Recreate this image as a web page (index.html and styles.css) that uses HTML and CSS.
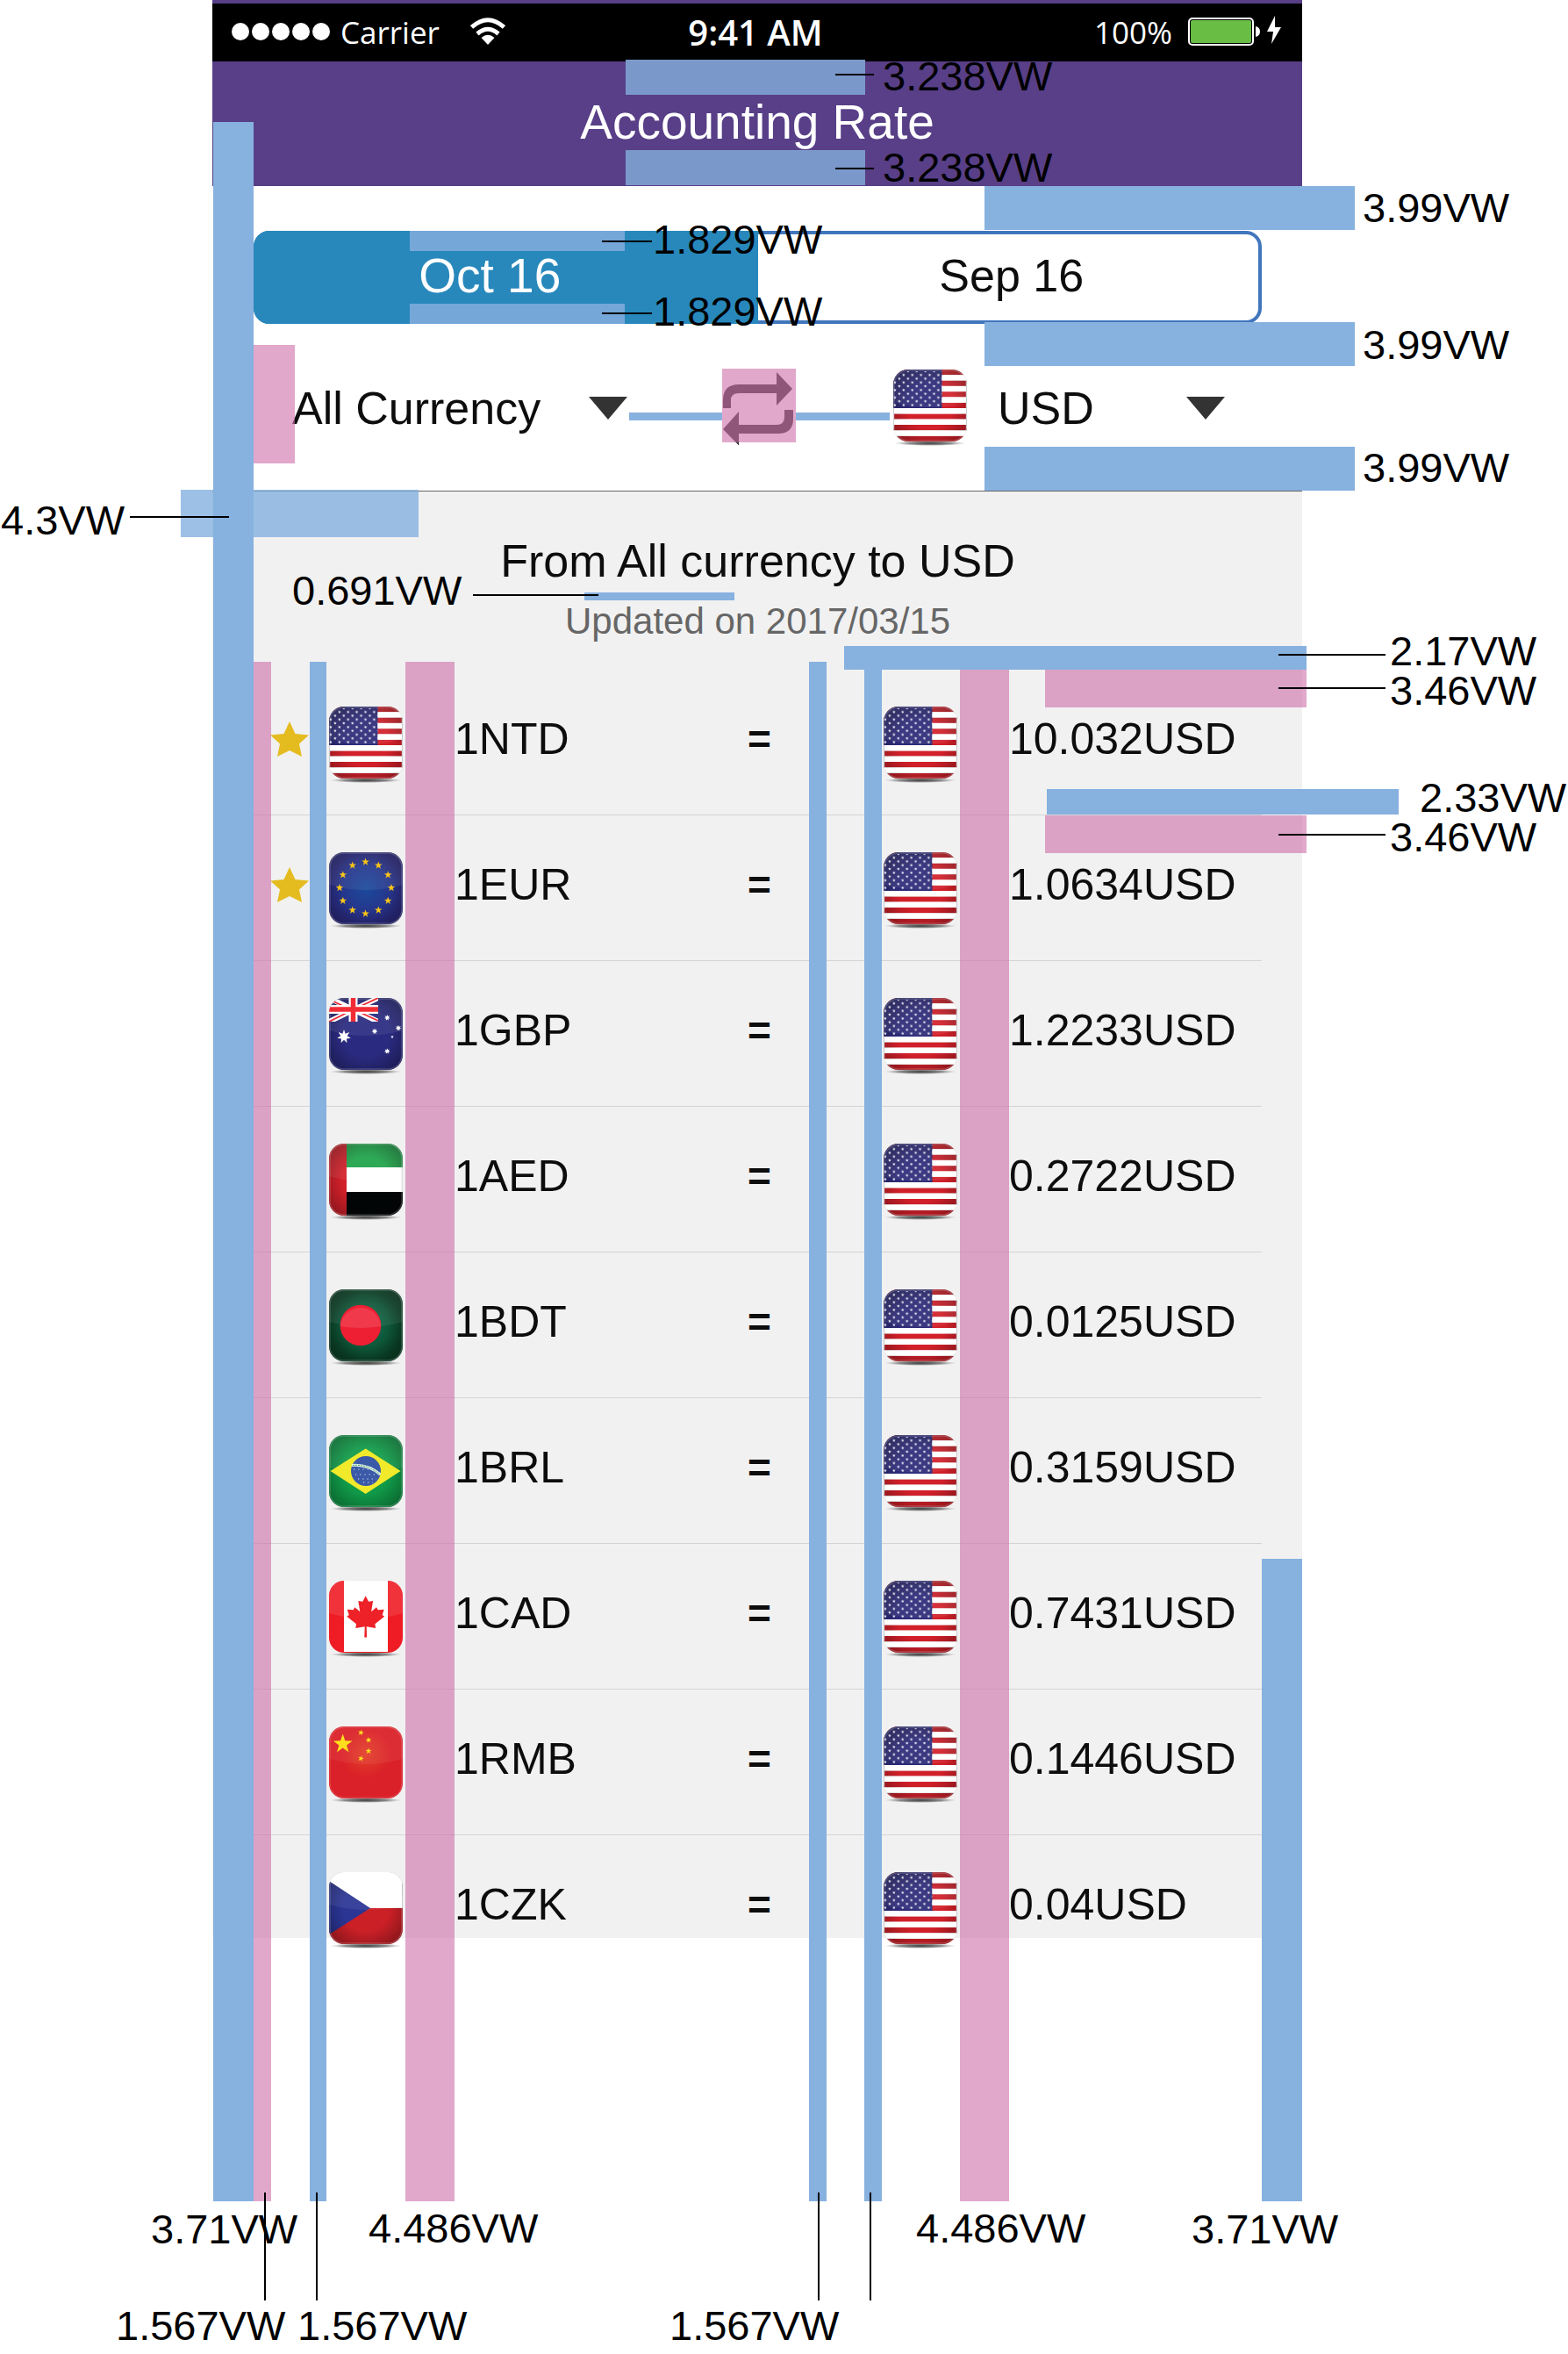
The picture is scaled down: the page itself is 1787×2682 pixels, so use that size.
FILE: index.html
```html
<!DOCTYPE html>
<html lang="en">
<head>
<meta charset="utf-8">
<meta name="viewport" content="width=device-width, initial-scale=1">
<title>Accounting Rate – spacing spec</title>
<link rel="stylesheet" href="styles.css">
</head>
<body>
<svg class="defs" aria-hidden="true">
  <defs>
    <clipPath id="tile"><rect width="84" height="82" rx="17"/></clipPath>
    <radialGradient id="shade" cx="50%" cy="50%" r="70%">
      <stop offset="0.45" stop-color="#000" stop-opacity="0"/>
      <stop offset="1" stop-color="#000" stop-opacity="0.4"/>
    </radialGradient>
    <radialGradient id="ground">
      <stop offset="0" stop-color="#222" stop-opacity="0.9"/>
      <stop offset="0.6" stop-color="#444" stop-opacity="0.6"/>
      <stop offset="1" stop-color="#888" stop-opacity="0"/>
    </radialGradient>
    <radialGradient id="euBlue"><stop offset="0" stop-color="#1b4a9c"/><stop offset="1" stop-color="#2b2b83"/></radialGradient>
    <radialGradient id="bdGreen"><stop offset="0" stop-color="#117455"/><stop offset="1" stop-color="#0b4428"/></radialGradient>
    <radialGradient id="cnRed" cy="38%"><stop offset="0" stop-color="#e4402a"/><stop offset="0.7" stop-color="#da2028"/></radialGradient>
    <path id="star5" d="M0-10 2.35-3.24 9.51-3.09 3.8 1.24 5.88 8.09 0 4-5.88 8.09-3.8 1.24-9.51-3.09-2.35-3.24Z"/>
    <path id="star7" d="M0-10 2-4.2 7.8-6.2 4.6-1 9.7 2.2 3.7 3 4.3 9 0 4.7-4.3 9-3.7 3-9.7 2.2-4.6-1-7.8-6.2-2-4.2Z"/>
    <pattern id="stars" x="0" y="0" width="9.9" height="8.6" patternUnits="userSpaceOnUse">
      <use href="#star5" transform="translate(1.9 6.2) scale(.19)" fill="#fff"/>
      <use href="#star5" transform="translate(6.9 1.9) scale(.19)" fill="#fff"/>
    </pattern>
    <g id="gloss">
      <rect width="84" height="82" fill="url(#shade)"/>
      <path d="M0 0H84V37Q42 49 0 37Z" fill="#fff" opacity=".07"/>
      <rect x="1" y="1" width="82" height="80" rx="16" fill="none" stroke="#fff" stroke-opacity=".18" stroke-width="1.5"/>
    </g>
    <ellipse id="shadow" cx="42" cy="84" rx="41" ry="3" fill="url(#ground)"/>
    <symbol id="us" viewBox="0 0 84 88">
      <use href="#shadow"/>
      <g clip-path="url(#tile)">
        <path stroke="#d2202a" stroke-width="6.2" d="M0 3.1H84M0 15.7H84M0 28.3H84M0 40.9H84M0 53.5H84M0 66.1H84M0 79H84"/>
        <path fill="#2d2b78" d="M0 0H55.500V44H0Z"/>
        <use href="#gloss"/>
        <path stroke="#fff" stroke-width="6.200" d="M55.500 9.400H84M55.500 22H84M55.500 34.600H84M0 47.200H84M0 59.800H84M0 72.500H84"/>
        <path fill="url(#stars)" d="M0 2H55.500V43H0Z"/>
        <path fill="#c9cbd0" d="M0 44H1V70H0ZM83 12H84V70H83Z"/>
      </g>
    </symbol>
    <symbol id="eu" viewBox="0 0 84 88">
      <use href="#shadow"/>
      <g clip-path="url(#tile)">
        <path fill="url(#euBlue)" d="M0 0H84V82H0Z"/>
        <use href="#gloss"/>
        <g fill="#fcc617">
          <use href="#star5" transform="translate(41.500 11) scale(.45)"/><use href="#star5" transform="translate(56.300 15) scale(.45)"/>
          <use href="#star5" transform="translate(67.200 25.800) scale(.45)"/><use href="#star5" transform="translate(71 40.500) scale(.45)"/>
          <use href="#star5" transform="translate(67.200 55.300) scale(.45)"/><use href="#star5" transform="translate(56.300 66) scale(.45)"/>
          <use href="#star5" transform="translate(41.500 70) scale(.45)"/><use href="#star5" transform="translate(26.700 66) scale(.45)"/>
          <use href="#star5" transform="translate(15.800 55.300) scale(.45)"/><use href="#star5" transform="translate(12 40.500) scale(.45)"/>
          <use href="#star5" transform="translate(15.800 25.800) scale(.45)"/><use href="#star5" transform="translate(26.700 15) scale(.45)"/>
        </g>
      </g>
    </symbol>
    <symbol id="au" viewBox="0 0 84 88">
      <use href="#shadow"/>
      <g clip-path="url(#tile)">
        <path fill="#2a2a80" d="M0 0H84V82H0Z"/>
        <use href="#gloss"/>
        <svg width="56" height="27" viewBox="0 0 56 27">
          <path stroke="#fff" stroke-width="6" d="M0 0 56 27M56 0 0 27"/>
          <path stroke="#ee2a33" stroke-width="1.800" d="M0 1.500 24 13M56 0 30 12M0 27 24 15M56 26 32 15"/>
          <path stroke="#fff" stroke-width="10" d="M27.500 0V27M0 13H56"/>
          <path stroke="#f22c35" stroke-width="5.500" d="M27.500 0V27M0 13H56"/>
        </svg>
        <g fill="#fff">
          <use href="#star7" transform="translate(17 44) scale(.8)"/><use href="#star7" transform="translate(66.300 22.500) scale(.35)"/>
          <use href="#star7" transform="translate(79 34.300) scale(.35)"/><use href="#star7" transform="translate(52 38) scale(.35)"/>
          <use href="#star7" transform="translate(66.300 60.700) scale(.35)"/><use href="#star5" transform="translate(72 44.300) scale(.2)"/>
        </g>
      </g>
    </symbol>
    <symbol id="ae" viewBox="0 0 84 88">
      <use href="#shadow"/>
      <g clip-path="url(#tile)">
        <path fill="#1fa349" d="M20 0H84V27H20Z"/>
        <path fill="#020506" d="M20 55H84V82H20Z"/><path fill="#d3202a" d="M0 0H20V82H0Z"/>
        <use href="#gloss"/>
        <path fill="#fff" d="M20 27H84V55H20Z"/>
        <path fill="#e2e2e2" d="M82.500 27H84V55H82.500Z"/>
      </g>
    </symbol>
    <symbol id="bd" viewBox="0 0 84 88">
      <use href="#shadow"/>
      <g clip-path="url(#tile)">
        <path fill="url(#bdGreen)" d="M0 0H84V82H0Z"/>
        <use href="#gloss"/>
        <circle cx="36" cy="41" r="23.300" fill="#ee1f33"/>
        <path d="M12.800 42A23.300 23.300 0 0 1 59.200 42Q36 46 12.800 42Z" fill="#fff" opacity=".12"/>
      </g>
    </symbol>
    <symbol id="br" viewBox="0 0 84 88">
      <use href="#shadow"/>
      <g clip-path="url(#tile)">
        <path fill="#109a48" d="M0 0H84V82H0Z"/>
        <use href="#gloss"/>
        <path fill="#f1ea2b" d="M1.500 41 41.700 15.500 81.500 41 41.700 67Z"/>
        <circle cx="42" cy="41" r="17" fill="#3a5aa8"/>
        <path fill="none" stroke="#e3f1e6" stroke-width="3" d="M26 34.500Q44 33 58.500 45"/>
        <path fill="none" stroke="#4ea366" stroke-width="1" stroke-dasharray="2 1" d="M27 34.500Q44 33 58 45"/>
        <path stroke="#dfe6f5" stroke-width="1.200" stroke-dasharray="1.200 4" d="M28 39H50M30 45H56M33 50H54M39 54H50"/>
      </g>
    </symbol>
    <symbol id="ca" viewBox="0 0 84 88">
      <use href="#shadow"/>
      <g clip-path="url(#tile)">
        <path fill="#ef1c25" d="M0 0H84V82H0Z"/>
        <path fill="#fff" opacity=".1" d="M0 0H84V37Q42 49 0 37Z"/>
        <path fill="#fff" d="M17 0H67V81H17Z"/>
        <path fill="#ed2127" d="M41.700 17.300 45.100 23.700 50.100 23 48.100 35.300 54.100 30.300 55.700 33.300 62.700 32.700 60.700 39 63.100 40.700 52.400 49.300 53.100 54 42.700 52.300 43.100 64.500H40.300L40.700 52.300 30.300 54 31 49.300 20.300 40.700 22.700 39 20.700 32.700 27.700 33.300 29.300 30.300 35.300 35.300 33.300 23 38.300 23.700Z"/>
      </g>
    </symbol>
    <symbol id="cn" viewBox="0 0 84 88">
      <use href="#shadow"/>
      <g clip-path="url(#tile)">
        <path fill="url(#cnRed)" d="M0 0H84V82H0Z"/>
        <path fill="#fff" opacity=".06" d="M0 0H84V37Q42 49 0 37Z"/>
        <rect x="1" y="1" width="82" height="80" rx="16" fill="none" stroke="#fff" stroke-opacity=".2"/>
        <g fill="#ffdd1c">
          <use href="#star5" transform="translate(15.700 20) scale(1.150)"/>
          <use href="#star5" transform="translate(36.300 7) rotate(12) scale(.36)"/><use href="#star5" transform="translate(45 15.500) rotate(-10) scale(.36)"/>
          <use href="#star5" transform="translate(45 28) scale(.36)"/><use href="#star5" transform="translate(36.300 36.500) rotate(15) scale(.36)"/>
        </g>
      </g>
    </symbol>
    <symbol id="cz" viewBox="0 0 84 88">
      <use href="#shadow"/>
      <g clip-path="url(#tile)">
        <path fill="#cc2027" d="M0 41H84V82H0Z"/><path fill="#2a3594" d="M0 10 47 41 0 71Z"/>
        <use href="#gloss"/>
        <path fill="#fff" d="M0 0H83V40.500H47L0 10Z"/>
      </g>
    </symbol>
    <symbol id="fav" viewBox="0 0 44 42"><path fill="#e5bc20" d="M22 1 28.500 15 44 16.500 33 26.500 36 41 22 34 8 41 11 26.500 0 16.500 15.500 15Z"/></symbol>
    <symbol id="caret" viewBox="0 0 44 26"><path fill="#333" d="M0 0H44L22 26Z"/></symbol>
  </defs>
</svg>

<main class="phone">
  <div class="status">
    <div class="status-left">
      <span class="dots"><i></i><i></i><i></i><i></i><i></i></span>
      <span class="carrier">Carrier</span>
      <svg class="wifi" viewBox="0 0 40 32" aria-label="Wi-Fi">
        <path fill="none" stroke="#fff" stroke-width="5" d="M1.500 11Q20-5.500 38.500 11M8 18.500Q20 8 32 18.500"/>
        <path fill="#fff" d="M20 31 12.500 23Q20 16.500 27.500 23Z"/>
      </svg>
    </div>
    <time class="clock">9:41 AM</time>
    <div class="status-right">
      <span>100%</span>
      <svg class="battery" viewBox="0 0 108 36" aria-label="Charging">
        <rect x="1" y="3" width="73" height="30" rx="4" fill="none" stroke="#fff" stroke-width="2"/>
        <rect x="3" y="5" width="69" height="26" rx="2" fill="#69bd45"/>
        <path fill="#fff" d="M77 12Q82 13 82 18T77 24ZM99 0 90 18H97L95 32 106 13H99Z"/>
      </svg>
    </div>
  </div>

  <header class="titlebar"><h1>Accounting Rate</h1></header>

  <div class="tabs">
    <button class="tab tab-active" type="button">Oct 16</button>
    <button class="tab" type="button">Sep 16</button>
  </div>

  <div class="picker">
    <label class="field field-from">
      <select aria-label="From currency"><option>All Currency</option></select>
      <svg class="caret"><use href="#caret"/></svg>
    </label>
    <button class="swap" type="button" aria-label="Swap currencies">
      <svg viewBox="0 0 84 86"><path fill="#333" d="M1 43V34Q1 16 19 16H62V2L80 21 62 40V26H19Q10 26 10 34V43ZM81 45V55Q81 72 64 72H19V85.500L1 67 19 47V62H62Q71 62 71 53V45Z"/></svg>
    </button>
    <label class="field field-to">
      <svg class="flag"><use href="#us"/></svg>
      <select aria-label="To currency"><option>USD</option></select>
      <svg class="caret"><use href="#caret"/></svg>
    </label>
  </div>

  <section class="rates">
    <h2>From All currency to USD</h2>
    <p class="updated">Updated on 2017/03/15</p>
    <table class="list">
      <colgroup><col class="c-star"><col class="c-flag"><col><col class="c-eq"><col class="c-flag"><col class="c-value"></colgroup>
      <tbody>
        <tr><td class="star"><svg><use href="#fav"/></svg></td><td><svg class="flag"><use href="#us"/></svg></td><td>1NTD</td><td class="eq">=</td><td><svg class="flag"><use href="#us"/></svg></td><td>10.032USD</td></tr>
        <tr><td class="star"><svg><use href="#fav"/></svg></td><td><svg class="flag"><use href="#eu"/></svg></td><td>1EUR</td><td class="eq">=</td><td><svg class="flag"><use href="#us"/></svg></td><td>1.0634USD</td></tr>
        <tr><td></td><td><svg class="flag"><use href="#au"/></svg></td><td>1GBP</td><td class="eq">=</td><td><svg class="flag"><use href="#us"/></svg></td><td>1.2233USD</td></tr>
        <tr><td></td><td><svg class="flag"><use href="#ae"/></svg></td><td>1AED</td><td class="eq">=</td><td><svg class="flag"><use href="#us"/></svg></td><td>0.2722USD</td></tr>
        <tr><td></td><td><svg class="flag"><use href="#bd"/></svg></td><td>1BDT</td><td class="eq">=</td><td><svg class="flag"><use href="#us"/></svg></td><td>0.0125USD</td></tr>
        <tr><td></td><td><svg class="flag"><use href="#br"/></svg></td><td>1BRL</td><td class="eq">=</td><td><svg class="flag"><use href="#us"/></svg></td><td>0.3159USD</td></tr>
        <tr><td></td><td><svg class="flag"><use href="#ca"/></svg></td><td>1CAD</td><td class="eq">=</td><td><svg class="flag"><use href="#us"/></svg></td><td>0.7431USD</td></tr>
        <tr><td></td><td><svg class="flag"><use href="#cn"/></svg></td><td>1RMB</td><td class="eq">=</td><td><svg class="flag"><use href="#us"/></svg></td><td>0.1446USD</td></tr>
        <tr><td></td><td><svg class="flag"><use href="#cz"/></svg></td><td>1CZK</td><td class="eq">=</td><td><svg class="flag"><use href="#us"/></svg></td><td>0.04USD</td></tr>
      </tbody>
    </table>
  </section>

  <!-- Spacing overlay -->
  <div class="spec">
    <div class="bar on-purple title-top"></div>
    <div class="bar on-purple title-bottom"></div>
    <div class="bar on-tab tab-top"></div>
    <div class="bar on-tab tab-bottom"></div>
    <div class="bar blue gap-1"></div>
    <div class="bar blue gap-2"></div>
    <div class="bar blue gap-3"></div>
    <div class="bar pink from-inset"></div>
    <div class="bar blue link-left"></div>
    <div class="bar blue link-right"></div>
    <div class="bar pink swap-box"></div>
    <div class="bar sheer heading-top"></div>
    <div class="bar blue heading-gap"></div>
    <div class="bar blue margin-left"></div>
    <div class="bar pink star-left"></div>
    <div class="bar blue star-right"></div>
    <div class="bar pink flag-gap"></div>
    <div class="bar blue eq-right"></div>
    <div class="bar blue flag-left"></div>
    <div class="bar pink flag-gap-2"></div>
    <div class="bar blue margin-right"></div>
    <div class="bar blue list-top"></div>
    <div class="bar pink row-top"></div>
    <div class="bar blue row-bottom"></div>
    <div class="bar pink row-top-2"></div>

    <i class="line l-title-1"></i><i class="line l-title-2"></i>
    <i class="line l-tab-1"></i><i class="line l-tab-2"></i>
    <i class="line l-heading"></i><i class="line l-sub"></i>
    <i class="line l-list-1"></i><i class="line l-list-2"></i><i class="line l-list-3"></i>
    <i class="line drop d-1"></i><i class="line drop d-2"></i><i class="line drop d-3"></i><i class="line drop d-4"></i>

    <span class="note n-title-1">3.238VW</span>
    <span class="note n-title-2">3.238VW</span>
    <span class="note n-tab-1">1.829VW</span>
    <span class="note n-tab-2">1.829VW</span>
    <span class="note n-gap-1">3.99VW</span>
    <span class="note n-gap-2">3.99VW</span>
    <span class="note n-gap-3">3.99VW</span>
    <span class="note n-heading">4.3VW</span>
    <span class="note n-sub">0.691VW</span>
    <span class="note n-list-1">2.17VW</span>
    <span class="note n-list-2">3.46VW</span>
    <span class="note n-list-3">2.33VW</span>
    <span class="note n-list-4">3.46VW</span>
    <span class="note n-foot-1">3.71VW</span>
    <span class="note n-foot-2">4.486VW</span>
    <span class="note n-foot-3">4.486VW</span>
    <span class="note n-foot-4">3.71VW</span>
    <span class="note n-foot-5">1.567VW</span>
    <span class="note n-foot-6">1.567VW</span>
    <span class="note n-foot-7">1.567VW</span>
  </div>
</main>
</body>
</html>
```
FILE: styles.css
```css
* { box-sizing: border-box; }

body {
  margin: 0;
  padding: 0 303px 474px 242px;
  background: #fff;
  color: #0d0d0d;
  font-family: "Liberation Sans", Arial, sans-serif;
  font-size: 50px;
}

h1, h2, p { margin: 0; font-weight: 400; }

button, select {
  margin: 0;
  padding: 0;
  border: 0;
  background: none;
  color: inherit;
  font: inherit;
  appearance: none;
}

svg { display: block; }
.defs { position: absolute; width: 0; height: 0; }
.phone { position: relative; }
.flag { width: 84px; height: 88px; flex: none; }
.caret { width: 44px; height: 26px; flex: none; }

/* Status bar */
.status {
  display: grid;
  grid-template-columns: 1fr auto 1fr;
  align-items: center;
  height: 70px;
  padding: 0 22px 2px;
  border-top: 4px solid #583f87;
  background: #000;
  color: #fff;
  font-family: "Open Sans", "Noto Sans", sans-serif;
  font-size: 35px;
}
.status-left, .status-right { display: flex; align-items: center; }
.status-right { justify-content: flex-end; gap: 18px; }
.dots { display: flex; gap: 3px; }
.dots i { width: 20px; height: 20px; border-radius: 50%; background: #fff; }
.carrier { margin-left: 12px; }
.wifi { width: 40px; height: 32px; margin-left: 35px; }
.clock { padding-right: 4px; font-size: 40px; font-weight: 600; }
.battery { width: 108px; height: 36px; }

/* Title */
.titlebar {
  display: flex;
  align-items: center;
  justify-content: center;
  height: 142px;
  padding-bottom: 4px;
  background: #583f87;
  color: #fff;
}
.titlebar h1 { font-size: 55px; }

/* Month tabs */
.tabs {
  display: grid;
  grid-template-columns: 1fr 1fr;
  height: 106px;
  margin: 51px 46px 0 47px;
  border: 4px solid #4176bd;
  border-radius: 18px;
}
.tab { padding: 0 0 4px 8px; font-size: 52px; }
.tab-active {
  margin: -4px 0 -4px -4px;
  padding: 0 36px 4px 0;
  border-radius: 18px 0 0 18px;
  background: #2888bc;
  color: #fff;
  font-size: 55px;
}

/* Currency picker */
.picker {
  display: grid;
  grid-template-columns: 1fr 84px 1fr;
  align-items: center;
  height: 190px;
  padding: 2px 42px 0 46px;
  font-size: 52px;
}
.field { display: flex; align-items: center; }
.field select { flex: 1; min-width: 0; }
.field-from { padding: 0 108px 0 45px; }
.field-to { padding: 0 46px 0 111px; }
.field-to select { margin-left: 35px; }
.swap svg { width: 84px; height: 86px; }

/* Rates */
.rates {
  border-top: 1px solid #666;
  padding: 49px 46px 0 47px;
  background: #f1f1f1;
}
.rates h2 { font-size: 52px; line-height: 60px; text-align: center; }
.updated {
  margin-top: 15px;
  color: #666;
  font-size: 42px;
  line-height: 48px;
  text-align: center;
}
.list {
  width: 100%;
  margin-top: 31px;
  border-collapse: separate;
  border-spacing: 0;
  table-layout: fixed;
}
.c-star { width: 86px; }
.c-flag { width: 142px; }
.c-eq { width: 284px; }
.c-value { width: 289px; }
.list td {
  height: 166px;
  padding: 42px 0 0 1px;
  border-bottom: 1px solid #d4d4d6;
  line-height: 74px;
  vertical-align: top;
  white-space: nowrap;
}
.list tr:last-child td { height: 117px; border: 0; }
.list tr:last-child .flag { margin-bottom: -16px; }
.list .flag { margin-left: -1px; }
.list .star { padding: 58px 0 0 19px; }
.star svg { width: 44px; height: 42px; }
.list .eq { font-size: 46px; font-weight: 700; text-align: center; }

/* Spacing overlay: bars, leader lines and notes */
.spec { pointer-events: none; }
.bar, .line, .note { position: absolute; }
.blue { background: #87b1df; }
.pink { background: rgba(205, 110, 170, 0.6); }
.sheer { background: rgba(126, 172, 222, 0.76); }
.on-purple { background: #7b98ca; }
.on-tab { background: #75a7d8; }

.on-purple { left: 471px; width: 273px; height: 40px; }
.title-top { top: 68px; }
.title-bottom { top: 171px; }
.on-tab { left: 225px; width: 245px; height: 23px; }
.tab-top { top: 263px; }
.tab-bottom { top: 346px; }

.gap-1, .gap-2, .gap-3 { right: -60px; width: 422px; height: 50px; }
.gap-1 { top: 212px; }
.gap-2 { top: 367px; }
.gap-3 { top: 509px; }

.from-inset { left: 47px; top: 393px; width: 47px; height: 135px; }
.link-left, .link-right { top: 470px; height: 9px; }
.link-left { left: 475px; width: 106px; }
.link-right { left: 665px; width: 107px; }
.swap-box { left: 581px; top: 420px; width: 84px; height: 84px; }
.heading-top { left: -36px; top: 558px; width: 271px; height: 54px; }
.heading-gap { left: 424px; top: 675px; width: 171px; height: 9px; }

.margin-left { left: 1px; top: 139px; bottom: -300px; width: 46px; }
.star-left, .star-right, .flag-gap, .eq-right { top: 754px; bottom: -300px; }
.flag-left, .flag-gap-2 { top: 763px; bottom: -300px; }
.star-left { left: 47px; width: 20px; }
.star-right { left: 111px; width: 19px; }
.flag-gap { left: 220px; width: 56px; }
.eq-right { right: 542px; width: 20px; }
.flag-left { right: 479px; width: 20px; }
.flag-gap-2 { right: 334px; width: 56px; }
.margin-right { right: 0; top: 1776px; bottom: -300px; width: 46px; }

.list-top { right: -5px; top: 736px; width: 527px; height: 27px; }
.row-top, .row-top-2 { right: -5px; width: 298px; height: 43px; }
.row-top { top: 763px; }
.row-top-2 { top: 929px; }
.row-bottom { right: -110px; top: 899px; width: 401px; height: 29px; }

.line { height: 2px; background: #000; }
.l-title-1, .l-title-2 { left: 710px; width: 44px; }
.l-title-1 { top: 84px; }
.l-title-2 { top: 191px; }
.l-tab-1, .l-tab-2 { left: 444px; width: 57px; }
.l-tab-1 { top: 274px; }
.l-tab-2 { top: 356px; }
.l-heading { left: -94px; top: 588px; width: 113px; }
.l-sub { left: 297px; top: 677px; width: 143px; }
.l-list-1, .l-list-2, .l-list-3 { right: -95px; width: 122px; }
.l-list-1 { top: 745px; }
.l-list-2 { top: 783px; }
.l-list-3 { top: 950px; }
.drop { bottom: -413px; width: 2px; height: 123px; }
.d-1 { left: 59px; }
.d-2 { left: 118px; }
.d-3 { right: 550px; }
.d-4 { right: 491px; }

.note { color: #000; font-size: 47px; line-height: 48px; white-space: nowrap; }
.n-title-1, .n-title-2 { left: 764px; }
.n-title-1 { top: 63px; }
.n-title-2 { top: 167px; }
.n-tab-1, .n-tab-2 { left: 502px; }
.n-tab-1 { top: 249px; }
.n-tab-2 { top: 331px; }
.n-gap-1, .n-gap-2, .n-gap-3 { left: calc(100% + 69px); }
.n-gap-1 { top: 213px; }
.n-gap-2 { top: 369px; }
.n-gap-3 { top: 509px; }
.n-heading { left: -241px; top: 569px; }
.n-sub { left: 91px; top: 649px; }
.n-list-1, .n-list-2, .n-list-4 { left: calc(100% + 100px); }
.n-list-1 { top: 718px; }
.n-list-2 { top: 763px; }
.n-list-3 { left: calc(100% + 134px); top: 885px; }
.n-list-4 { top: 930px; }
.n-foot-1, .n-foot-4 { bottom: -356px; }
.n-foot-2, .n-foot-3 { bottom: -355px; }
.n-foot-5, .n-foot-6, .n-foot-7 { bottom: -466px; }
.n-foot-1 { left: -70px; }
.n-foot-2 { left: 178px; }
.n-foot-3 { left: 802px; }
.n-foot-4 { left: 1116px; }
.n-foot-5 { left: -110px; }
.n-foot-6 { left: 97px; }
.n-foot-7 { left: 521px; }
```
